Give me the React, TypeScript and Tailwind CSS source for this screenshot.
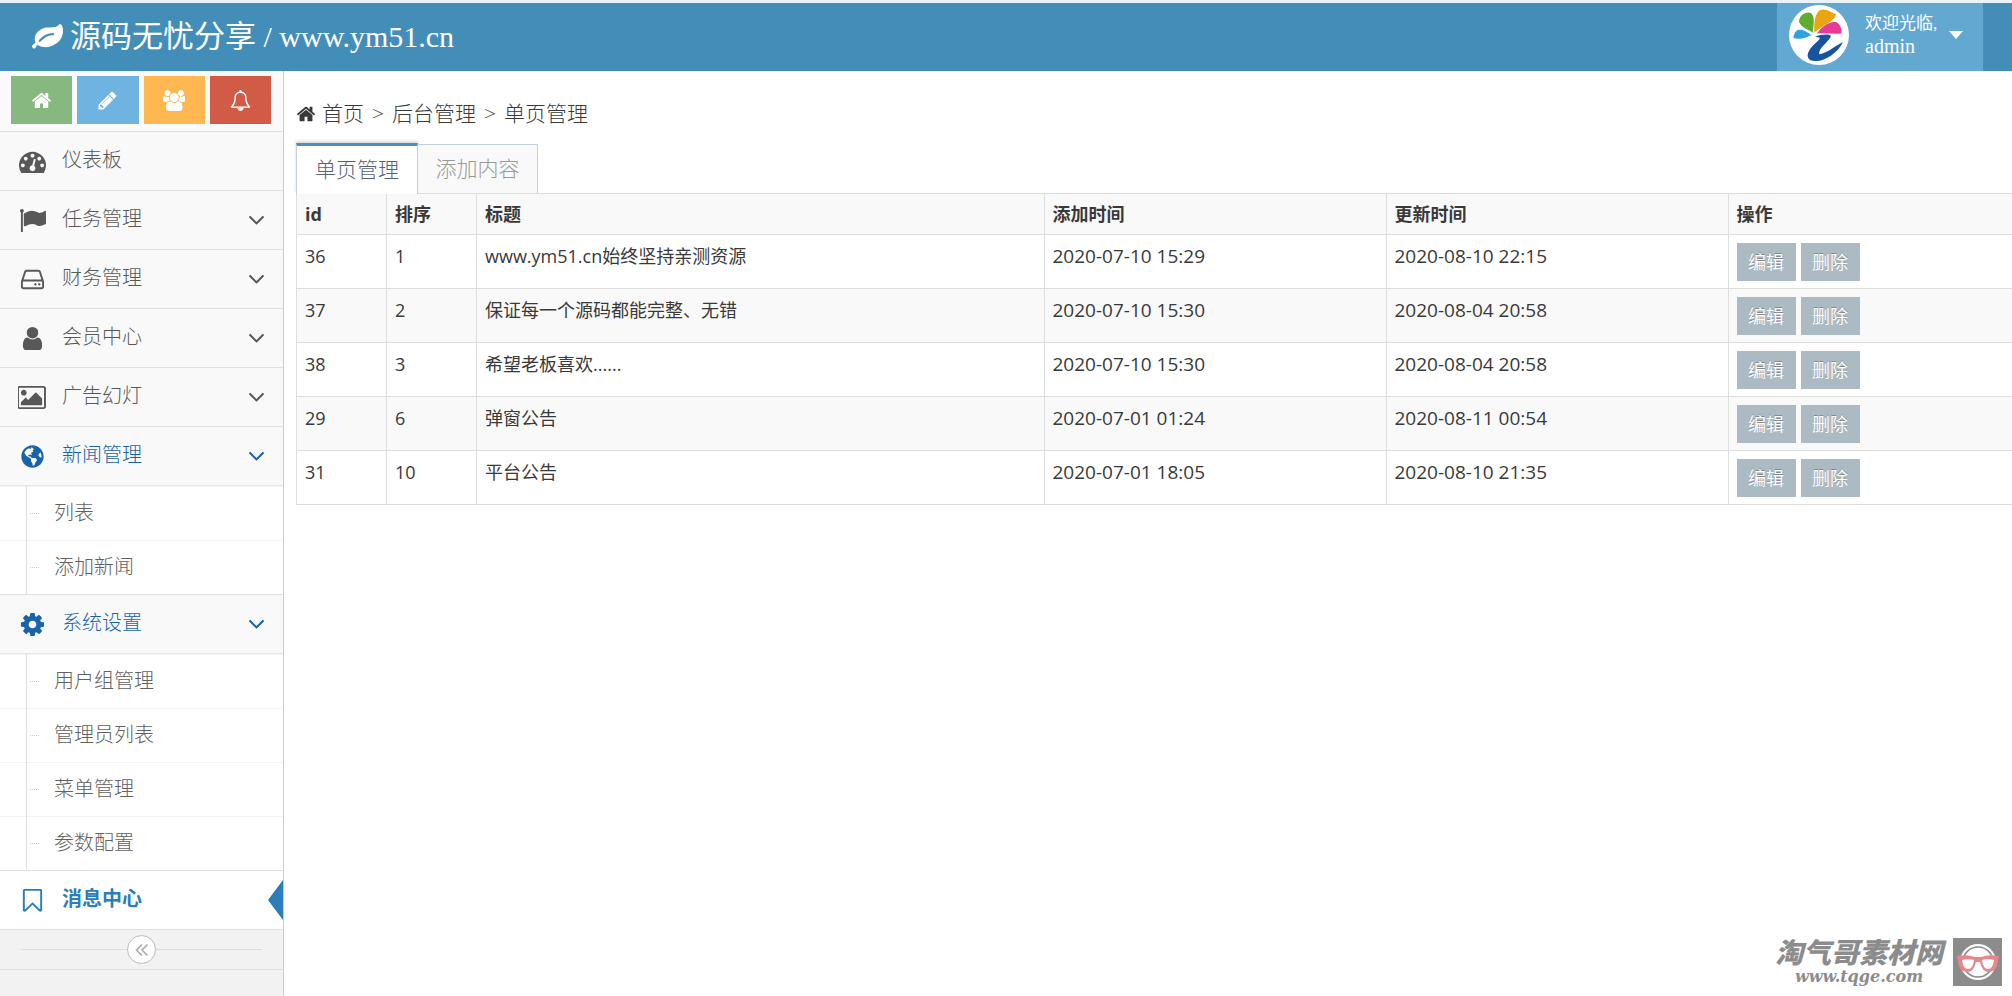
import { useState } from "react"
import { FaGlobeAmericas } from "react-icons/fa"

// Font Awesome 4 glyphs, drawn on its 1792 unit grid
const icons = {
  leaf: "M1280 704q0-26-19-45t-45-19q-172 0-318 49.5t-259.5 134-235.5 219.5q-19 21-19 45 0 26 19 45t45 19q24 0 45-19 27-24 74-71t67-66q137-124 268.5-176t313.5-52q26 0 45-19t19-45zm512-198q0 95-20 193-46 224-184.5 383t-357.5 268q-214 108-438 108-148 0-286-47-15-5-88-42t-96-37q-16 0-39.5 32t-45 70-52.5 70-60 32q-43 0-63.5-17.5t-45.5-59.5q-2-4-6-11t-5.5-10-3-9.5-1.5-13.5q0-35 31-73.5t68-65.5 68-56 31-48q0-4-14-38t-16-44q-9-51-9-104 0-115 43.5-220t119-184.5 170.5-139 204-95.5q55-18 145-25.5t179.5-9 178.5-6 163.5-24 113.5-56.5l29.5-29.5 29.5-28 27-20 36.5-16 43.5-4.5q39 0 70.5 46t47.5 112 24 124 8 96z",
  home: "M1472 992v480q0 26-19 45t-45 19h-384v-384h-256v384h-384q-26 0-45-19t-19-45v-480q0-1 .5-3t.5-3l575-474 575 474q1 2 1 6zm223-69l-62 74q-8 9-21 11h-3q-13 0-21-7l-692-577-692 577q-12 8-24 7-13-2-21-11l-62-74q-8-10-7-23.5t11-21.5l719-599q32-26 76-26t76 26l244 204v-195q0-14 9-23t23-9h192q14 0 23 9t9 23v408l219 182q10 8 11 21.5t-7 23.5z",
  pencil: "M491 1536l91-91-235-235-91 91v107h128v128h107zm523-928q0-22-22-22-10 0-17 7l-542 542q-7 7-7 17 0 22 22 22 10 0 17-7l542-542q7-7 7-17zm-54-192l416 416-832 832h-416v-416zm683 96q0 53-37 90l-166 166-416-416 166-165q36-38 90-38 53 0 91 38l235 234q37 39 37 91z",
  group: "M657 896q-162 5-265 128h-134q-82 0-138-40.5t-56-118.5q0-353 124-353 6 0 43.5 21t97.5 42.5 119 21.5q67 0 133-23-5 37-5 66 0 159 93 287zm1071 637q0 120-73 189.5t-194 69.5h-874q-121 0-194-69.5t-73-189.5q0-53 3.5-103.5t14-109 26.5-108.5 43-97.5 62-81 85.5-53.5 111.5-20q10 0 43 21.5t73 48 107 48 135 21.5 135-21.5 107-48 73-48 43-21.5q61 0 111.5 20t85.5 53.5 62 81 43 97.5 26.5 108.5 14 109 3.5 103.5zm-1024-1277q0 106-75 181t-181 75-181-75-75-181 75-181 181-75 181 75 75 181zm704 384q0 159-112.5 271.5t-271.5 112.5-271.5-112.5-112.5-271.5 112.5-271.5 271.5-112.5 271.5 112.5 112.5 271.5zm576 225q0 78-56 118.5t-138 40.5h-134q-103-123-265-128 93-128 93-287 0-29-5-66 66 23 133 23 59 0 119-21.5t97.5-42.5 43.5-21q124 0 124 353zm-128-609q0 106-75 181t-181 75-181-75-75-181 75-181 181-75 181 75 75 181z",
  bell: "M912 1696q0-16-16-16-59 0-101.5-42.5t-42.5-101.5q0-16-16-16t-16 16q0 73 51.5 124.5t124.5 51.5q16 0 16-16zm-666-288h1300q-266-300-266-832 0-51-24-105t-69-103-121.5-80.5-169.5-31.5-169.5 31.5-121.5 80.5-69 103-24 105q0 532-266 832zm1482 0q0 52-38 90t-90 38h-448q0 106-75 181t-181 75-181-75-75-181h-448q-52 0-90-38t-38-90q50-42 91-88t85-119.5 74.5-158.5 50-206 19.5-260q0-152 117-282.5t307-158.5q-8-19-8-39 0-40 28-68t68-28 68 28 28 68q0 20-8 39 190 28 307 158.5t117 282.5q0 139 19.5 260t50 206 74.5 158.5 85 119.5 91 88z",
  gauge: "M384 1152q0-53-37.5-90.5t-90.5-37.5-90.5 37.5-37.5 90.5 37.5 90.5 90.5 37.5 90.5-37.5 37.5-90.5zm192-448q0-53-37.5-90.5t-90.5-37.5-90.5 37.5-37.5 90.5 37.5 90.5 90.5 37.5 90.5-37.5 37.5-90.5zm428 481l101-382q6-26-7.5-48.5t-38.5-29.5-48 6.5-30 39.5l-101 382q-60 5-107 43.5t-63 98.5q-20 77 20 146t117 89 146-20 89-117q16-60-6-117t-72-91zm660-33q0-53-37.5-90.5t-90.5-37.5-90.5 37.5-37.5 90.5 37.5 90.5 90.5 37.5 90.5-37.5 37.5-90.5zm-640-640q0-53-37.5-90.5t-90.5-37.5-90.5 37.5-37.5 90.5 37.5 90.5 90.5 37.5 90.5-37.5 37.5-90.5zm448 192q0-53-37.5-90.5t-90.5-37.5-90.5 37.5-37.5 90.5 37.5 90.5 90.5 37.5 90.5-37.5 37.5-90.5zm320 448q0 261-141 483-19 29-54 29h-1402q-35 0-54-29-141-221-141-483 0-182 71-348t191-286 286-191 348-71 348 71 286 191 191 286 71 348z",
  flag: "M320 256q0 72-64 110v1266q0 13-9.5 22.5t-22.5 9.5h-64q-13 0-22.5-9.5t-9.5-22.5v-1266q-64-38-64-110 0-53 37.5-90.5t90.5-37.5 90.5 37.5 37.5 90.5zm1472 64v763q0 25-12.5 38.5t-39.5 27.5q-215 116-369 116-61 0-123.5-22t-108.5-48-115.5-48-142.5-22q-192 0-464 146-17 9-33 9-26 0-45-19t-19-45v-742q0-32 31-55 21-14 79-43 236-120 421-120 107 0 200 29t219 88q38 19 88 19 54 0 117.5-21t110-47 88-47 54.5-21q26 0 45 19t19 45z",
  disk: "M1168 1216q0 33-23.5 56.5t-56.5 23.5-56.5-23.5-23.5-56.5 23.5-56.5 56.5-23.5 56.5 23.5 23.5 56.5zm256 0q0 33-23.5 56.5t-56.5 23.5-56.5-23.5-23.5-56.5 23.5-56.5 56.5-23.5 56.5 23.5 23.5 56.5zm112 160v-320q0-13-9.5-22.5t-22.5-9.5h-1216q-13 0-22.5 9.5t-9.5 22.5v320q0 13 9.5 22.5t22.5 9.5h1216q13 0 22.5-9.5t9.5-22.5zm-1230-480h1180l-157-482q-4-13-16-21.5t-26-8.5h-782q-14 0-26 8.5t-16 21.5zm1358 160v320q0 66-47 113t-113 47h-1216q-66 0-113-47t-47-113v-320q0-25 16-75l197-606q17-53 63-86t101-33h782q55 0 101 33t63 86l197 606q16 50 16 75z",
  user: "M1536 1399q0 109-62.5 187t-150.5 78h-854q-88 0-150.5-78t-62.5-187q0-85 8.5-160.5t31.5-152 58.5-131 94-89 134.5-34.5q131 128 313 128t313-128q76 0 134.5 34.5t94 89 58.5 131 31.5 152 8.5 160.5zm-256-887q0 159-112.5 271.5t-271.5 112.5-271.5-112.5-112.5-271.5 112.5-271.5 271.5-112.5 271.5 112.5 112.5 271.5z",
  picture: "M576 576q0 80-56 136t-136 56-136-56-56-136 56-136 136-56 136 56 56 136zm1024 384v448h-1408v-192l320-320 160 160 512-512zm96-704h-1600q-13 0-22.5 9.5t-9.5 22.5v1216q0 13 9.5 22.5t22.5 9.5h1600q13 0 22.5-9.5t9.5-22.5v-1216q0-13-9.5-22.5t-22.5-9.5zm160 32v1216q0 66-47 113t-113 47h-1600q-66 0-113-47t-47-113v-1216q0-66 47-113t113-47h1600q66 0 113 47t47 113z",
  cog: "M1152 896q0-106-75-181t-181-75-181 75-75 181 75 181 181 75 181-75 75-181zm512-109v222q0 12-8 23t-20 13l-185 28q-19 54-39 91 35 50 107 138 10 12 10 25t-9 23q-27 37-99 108t-94 71q-12 0-26-9l-138-108q-44 23-91 38-16 136-29 186-7 28-36 28h-222q-14 0-24.5-8.5t-11.5-21.5l-28-184q-49-16-90-37l-141 107q-10 9-25 9-14 0-25-11-126-114-165-168-7-10-7-23 0-12 8-23 15-21 51-66.5t54-70.5q-27-50-41-99l-183-27q-13-2-21-12.5t-8-23.5v-222q0-12 8-23t19-13l186-28q14-46 39-92-40-57-107-138-10-12-10-24 0-10 9-23 26-36 98.5-107.5t94.5-71.5q13 0 26 10l138 107q44-23 91-38 16-136 29-186 7-28 36-28h222q14 0 24.5 8.5t11.5 21.5l28 184q49 16 90 37l142-107q9-9 24-9 13 0 25 10 129 119 165 170 7 8 7 22 0 12-8 23-15 21-51 66.5t-54 70.5q26 50 41 98l183 28q13 2 21 12.5t8 23.5z",
  bookmark: "M1408 256h-1024v1242l423-406 89-85 89 85 423 406v-1242zm12-128q23 0 44 9 33 13 52.5 41t19.5 62v1289q0 34-19.5 62t-52.5 41q-19 8-44 8-48 0-83-32l-441-424-441 424q-36 33-83 33-23 0-44-9-33-13-52.5-41t-19.5-62v-1289q0-34 19.5-62t52.5-41q21-9 44-9h1048z",
  angle: "M1395 736q0 13-10 23l-466 466q-10 10-23 10t-23-10l-466-466q-10-10-10-23t10-23l50-50q10-10 23-10t23 10l393 393 393-393q10-10 23-10t23 10l50 50q10 10 10 23z",
}

type IconName = keyof typeof icons

const wide: Partial<Record<IconName, string>> = {
  picture: "0 0 1920 1792",
  group: "64 0 1920 1792",
}

function Icon({ name, className }: { name: IconName; className: string }) {
  return (
    <svg viewBox={wide[name] ?? "0 0 1792 1792"} fill="currentColor" className={className} aria-hidden="true">
      <path d={icons[name]} />
    </svg>
  )
}

const shortcuts: { icon: IconName; label: string; color: string }[] = [
  { icon: "home", label: "首页", color: "bg-[#87b87f]" },
  { icon: "pencil", label: "编辑", color: "bg-[#6fb3e0]" },
  { icon: "group", label: "会员", color: "bg-[#ffb752]" },
  { icon: "bell", label: "消息", color: "bg-[#d15b47]" },
]

const menu: { icon: IconName | "globe"; label: string; arrow?: boolean; children?: string[] }[] = [
  { icon: "gauge", label: "仪表板" },
  { icon: "flag", label: "任务管理", arrow: true },
  { icon: "disk", label: "财务管理", arrow: true },
  { icon: "user", label: "会员中心", arrow: true },
  { icon: "picture", label: "广告幻灯", arrow: true },
  { icon: "globe", label: "新闻管理", arrow: true, children: ["列表", "添加新闻"] },
  { icon: "cog", label: "系统设置", arrow: true, children: ["用户组管理", "管理员列表", "菜单管理", "参数配置"] },
]

const rows = [
  { id: 36, sort: 1, title: "www.ym51.cn始终坚持亲测资源", added: "2020-07-10 15:29", updated: "2020-08-10 22:15" },
  { id: 37, sort: 2, title: "保证每一个源码都能完整、无错", added: "2020-07-10 15:30", updated: "2020-08-04 20:58" },
  { id: 38, sort: 3, title: "希望老板喜欢......", added: "2020-07-10 15:30", updated: "2020-08-04 20:58" },
  { id: 29, sort: 6, title: "弹窗公告", added: "2020-07-01 01:24", updated: "2020-08-11 00:54" },
  { id: 31, sort: 10, title: "平台公告", added: "2020-07-01 18:05", updated: "2020-08-10 21:35" },
]

function Avatar() {
  return (
    <svg viewBox="0 0 60 60" className="size-[60px]" aria-hidden="true">
      <circle cx="30" cy="30" r="30" fill="#fff" />
      <path d="M23.500 28C22 25 13 24 10 17 10 10 17 6 22 8c4 3 3 12 1.500 20z" fill="#5cae2c" />
      <path d="M25.500 28C25 20 25 10 31 5c6-2 10 2 16 4-1 8-14 11-21.500 19z" fill="#eba50f" />
      <path d="M28 28.500c5-7 13-13 20-11 4 3 5 7 4.500 11-8 1-16-1-24.500 0z" fill="#e83a96" />
      <path d="M22.500 30c-5-3-8-6-14-5-3 2-4 5-4 8 6 2 12 0 18-3z" fill="#2ca3dc" />
      <path d="M26 32c6-3 14-3 16-1-2 6-12 11-12 18 7 0 14-7 24-12-5 11-19 20-28 19-7 0-9-5-6-10 3-6 9-9 11-13-1-1-4-1-5-1z" fill="#17539f" />
    </svg>
  )
}

function Header() {
  return (
    <header className="flex h-[71px] shrink-0 items-stretch justify-between border-t-3 border-[#eaf3fa] bg-[#438eb9] pr-[29px] font-['Liberation_Serif','Noto_Sans_CJK_SC',serif] text-white">
      <a href="#" className="flex items-center gap-[7px] pl-8 text-[30px]">
        <Icon name="leaf" className="size-[31px]" />
        <span>
          <span className="text-[31px]">源码无忧分享</span> / www.ym51.cn
        </span>
      </a>
      <button type="button" className="flex w-[206px] items-center bg-[#62a8d1] pb-1 pl-3 text-left">
        <Avatar />
        <span className="ml-4 flex flex-col">
          <span className="text-[17px] leading-[22px]">欢迎光临,</span>
          <span className="text-[20px] leading-[22px]">admin</span>
        </span>
        <svg viewBox="0 0 14 8" className="ml-3 h-2 w-3.5" fill="#fff" aria-hidden="true">
          <path d="M0 0h14L7 8z" />
        </svg>
      </button>
    </header>
  )
}

function Sidebar() {
  return (
    <aside className="flex w-[284px] shrink-0 flex-col border-r border-[#ccc] bg-[#f2f2f2] text-[20px] font-light text-[#585858]">
      <div className="flex h-[60px] items-start gap-[5px] bg-[#fafafa] pt-[5px] pr-3 pl-[11px]">
        {shortcuts.map((s) => (
          <button key={s.icon} type="button" aria-label={s.label} className={`flex h-12 flex-1 items-center justify-center text-white ${s.color}`}>
            <Icon name={s.icon} className="h-[21px]" />
          </button>
        ))}
      </div>
      <ul>
        {menu.map((item) => (
          <li key={item.label} className="border-t border-[#e0e0e0]">
            <a href="#" className={`flex h-[58px] items-center bg-[#f9f9f9] pr-[13px] ${item.children ? "text-[#1963aa]" : ""}`}>
              <span className="flex w-[62px] justify-center pl-0.5">
                {item.icon === "globe" ? <FaGlobeAmericas className="size-[23px]" /> : <Icon name={item.icon} className="h-[27px]" />}
              </span>
              <span className="flex-1 pb-0.5">{item.label}</span>
              {item.arrow && <Icon name="angle" className="mb-0.5 size-[27px]" />}
            </a>
            {item.children && (
              <ul className="relative border-t border-[#e5e5e5] bg-white text-[#616161]">
                <span className="absolute inset-y-0 left-[26px] border-l border-[#ddd]" />
                {item.children.map((child) => (
                  <li key={child} className="h-[54px] border-t border-[#f4f4f4] first:border-t-0">
                    <a href="#" className="flex h-[52px] items-center">
                      <span className="mr-[15px] ml-[30px] w-[9px] border-t border-dotted border-[#ccc]" />
                      {child}
                    </a>
                  </li>
                ))}
              </ul>
            )}
          </li>
        ))}
        <li className="border-y border-[#e0e0e0]">
          <a href="#" className="flex h-[58px] items-center bg-white font-bold text-[#2b7dbc]">
            <span className="flex w-[62px] justify-center pl-0.5">
              <Icon name="bookmark" className="h-[27px]" />
            </span>
            <span className="flex-1 pb-0.5">消息中心</span>
            <svg viewBox="0 0 15 40" className="h-10 w-[15px]" fill="#2b7dbc" aria-hidden="true">
              <path d="M15 0v40L0 20z" />
            </svg>
          </a>
        </li>
      </ul>
      <div className="flex h-10 items-center border-b border-[#e0e0e0] px-[21px]">
        <span className="flex-1 border-t border-[#ddd]" />
        <button type="button" aria-label="收起" className="flex size-[29px] items-center justify-center rounded-full border border-[#bbb] bg-white text-[#aaa]">
          <svg viewBox="0 0 14 14" className="size-3.5" fill="none" stroke="currentColor" strokeWidth="1.6" aria-hidden="true">
            <path d="M7 1.500 1.500 7 7 12.500M12.500 1.500 7 7l5.500 5.500" />
          </svg>
        </button>
        <span className="flex-1 border-t border-[#ddd]" />
      </div>
    </aside>
  )
}

function PageTable() {
  const th = "h-[41px] border border-[#ddd] px-2 text-left font-bold"
  const td = "h-[54px] border border-[#ddd] px-2 pt-2 align-top leading-[27px]"

  return (
    <table className="w-full table-fixed border-collapse text-[18px] text-[#393939]">
      <colgroup>
        <col className="w-[90px]" />
        <col className="w-[90px]" />
        <col />
        <col className="w-[342px]" />
        <col className="w-[342px]" />
        <col className="w-[284px]" />
      </colgroup>
      <thead>
        <tr className="bg-[#f9f9f9]">
          <th className={th}>id</th>
          <th className={th}>排序</th>
          <th className={th}>标题</th>
          <th className={th}>添加时间</th>
          <th className={th}>更新时间</th>
          <th className={`${th} border-r-0`}>操作</th>
        </tr>
      </thead>
      <tbody>
        {rows.map((row) => (
          <tr key={row.id} className="even:bg-[#f9f9f9]">
            <td className={td}>{row.id}</td>
            <td className={td}>{row.sort}</td>
            <td className={td}>{row.title}</td>
            <td className={`${td} text-[19px]`}>{row.added}</td>
            <td className={`${td} text-[19px]`}>{row.updated}</td>
            <td className={`${td} border-r-0`}>
              <div className="flex gap-[5px]">
                <button type="button" className="h-[38px] w-[59px] bg-[#abbac3] text-white text-shadow-[0_-1px_0_rgba(0,0,0,0.25)]">编辑</button>
                <button type="button" className="h-[38px] w-[59px] bg-[#abbac3] text-white text-shadow-[0_-1px_0_rgba(0,0,0,0.25)]">删除</button>
              </div>
            </td>
          </tr>
        ))}
      </tbody>
    </table>
  )
}

function Watermark() {
  return (
    <div className="absolute right-2.5 bottom-2.5 flex items-center gap-2.5 text-[#8c8c8c]">
      <div className="flex flex-col items-center">
        <span className="font-['Liberation_Sans','Noto_Sans_CJK_SC',sans-serif] text-[28px] leading-[30px] font-black italic">淘气哥素材网</span>
        <span className="font-['DejaVu_Serif',serif] text-base leading-4 font-bold italic">www.tqge.com</span>
      </div>
      <svg viewBox="0 0 49 48" className="h-12 w-[49px]" fill="none" aria-hidden="true">
        <path d="M0 0h49v48H0z" fill="#8c8c8c" />
        <circle cx="25" cy="24" r="18" fill="#fff" />
        <circle cx="25" cy="24" r="15" stroke="#8c8c8c" strokeWidth="1.500" />
        <path d="M4 18q10-2 18 1h6q8-3 18-1l-1 5q-1 11-9 11-7 0-9-10h-4q-2 10-9 10-8 0-9-11z" fill="#e8868c" />
        <path d="M9 22q6-2 12 0-1 9-6 9-5 0-6-9zM29 22q6-2 12 0-1 9-6 9-5 0-6-9z" fill="#fff" />
      </svg>
    </div>
  )
}

export default function App() {
  const [tab, setTab] = useState("单页管理")
  const tabs = ["单页管理", "添加内容"]

  return (
    <div className="relative flex min-h-screen flex-col bg-white font-['Open_Sans','Noto_Sans_CJK_SC',sans-serif]">
      <Header />
      <div className="flex flex-1">
        <Sidebar />
        <main className="min-w-0 flex-1 pt-6 pl-3">
          <nav className="flex h-[37px] items-center gap-2 text-[21px] font-light text-[#393939]">
            <Icon name="home" className="mr-[-2px] size-5" />
            <a href="#">首页</a>
            <span>&gt;</span>
            <a href="#">后台管理</a>
            <span>&gt;</span>
            <span>单页管理</span>
          </nav>
          <div role="tablist" className="relative z-10 mt-[11px] -mb-px flex items-start text-[21px] font-light">
            {tabs.map((name) => (
              <button
                key={name}
                type="button"
                role="tab"
                aria-selected={tab === name}
                onClick={() => setTab(name)}
                className={
                  tab === name
                    ? "h-[51px] w-[122px] border-x border-t-3 border-x-[#c5d0dc] border-t-[#4c8fbd] bg-white text-[#576373] shadow-[0_-2px_3px_0_rgba(0,0,0,0.15)]"
                    : "mt-px h-[49px] w-[120px] border-t border-r border-[#c5d0dc] bg-[#f9f9f9] text-[#999]"
                }
              >
                {name}
              </button>
            ))}
          </div>
          <PageTable />
        </main>
      </div>
      <Watermark />
    </div>
  )
}
